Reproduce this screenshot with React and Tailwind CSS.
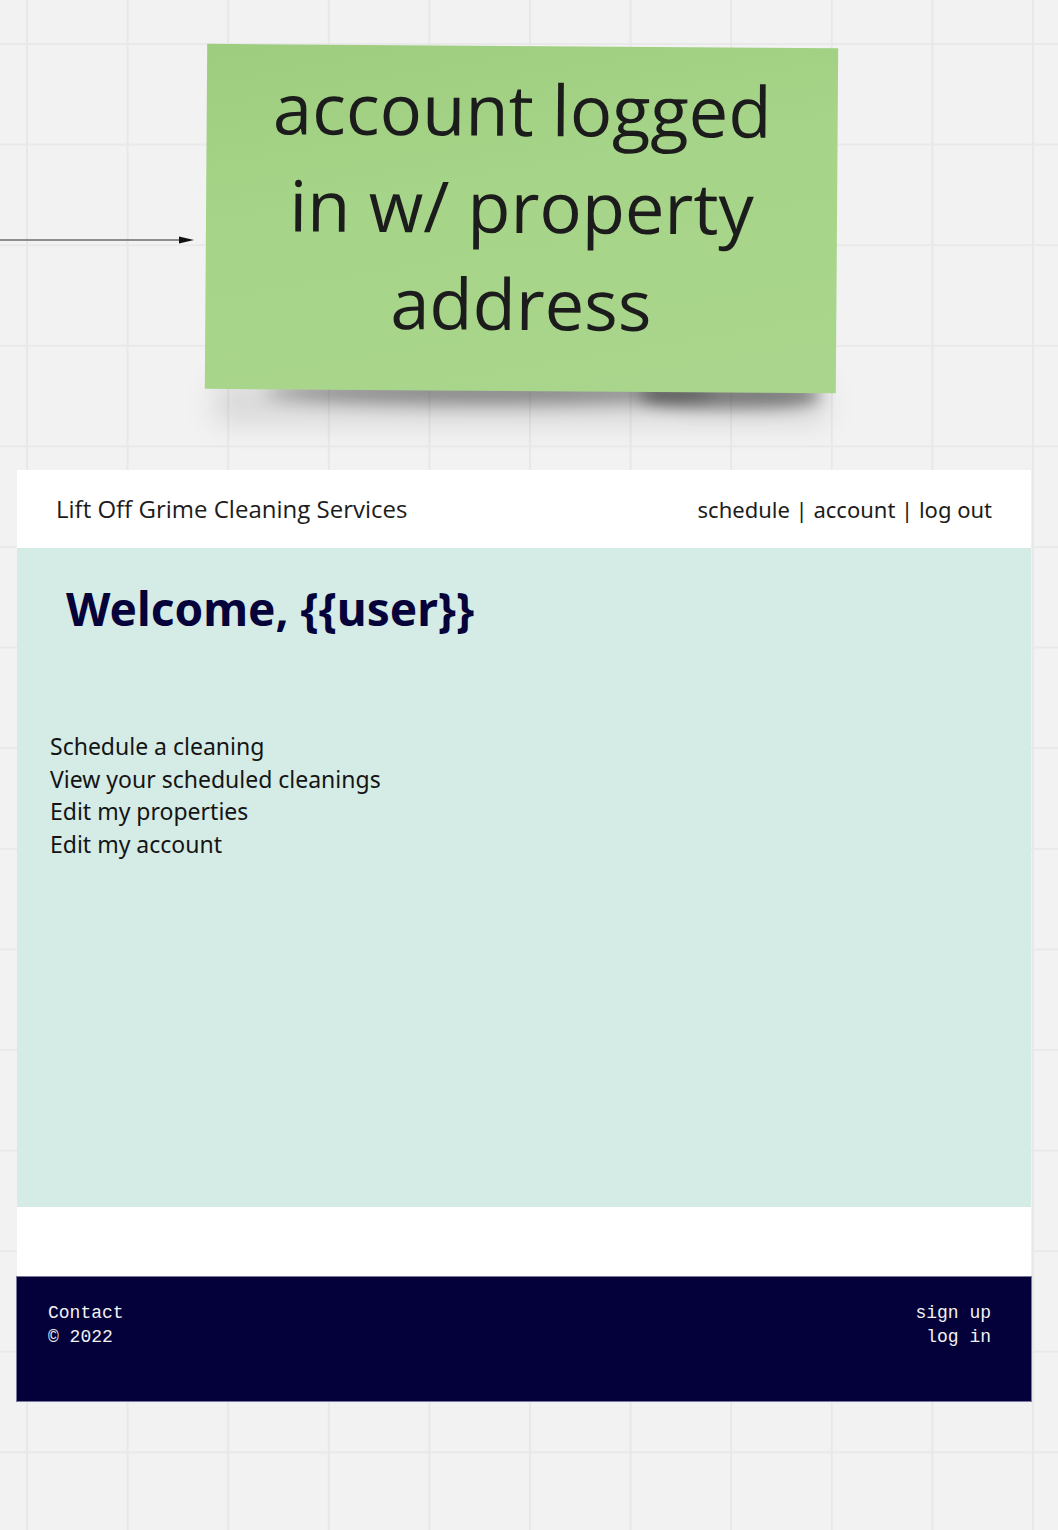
import React from "react";

export default function App() {
  return (
    <div className="relative w-[1058px] h-[1530px] overflow-hidden bg-[#f2f2f2] bg-[linear-gradient(to_right,#e8e8e8_2px,transparent_2px),linear-gradient(to_bottom,#e9e9e9_2px,transparent_2px)] bg-[size:100.6px_100.6px] bg-[position:26px_43px]">
      {/* arrow */}
      <svg className="absolute left-0 top-[234px]" width="200" height="12" viewBox="0 0 200 12">
        <line x1="0" y1="6" x2="182" y2="6" stroke="#6b6b6b" strokeWidth="1.5" />
        <polygon points="179,2.5 194,6 179,9.5" fill="#111" />
      </svg>

      {/* sticky note shadow */}
      <div className="absolute left-[265px] top-[380px] w-[450px] h-[24px] rounded-[50%] bg-black/40 blur-[9px]" />
      <div className="absolute left-[640px] top-[382px] w-[180px] h-[26px] rounded-[40%] bg-black/45 blur-[8px]" />
      <div className="absolute left-[215px] top-[380px] w-[610px] h-[44px] bg-black/10 blur-[14px]" />

      {/* sticky note */}
      <div className="absolute left-[206px] top-[46px] w-[631px] h-[345px] rotate-[0.4deg] bg-[linear-gradient(170deg,#9ecd7f_0%,#a6d488_40%,#a9d68c_100%)] flex items-center justify-center">
        <div className="text-center text-[70.5px] leading-[97px] text-[#1c1c1c] font-['Open_Sans',sans-serif] -mt-[24px]">
          account logged
          <br />
          in w/ property
          <br />
          address
        </div>
      </div>

      {/* page frame */}
      <div className="pt-[470px] pl-[17px]">
        <div className="w-[1014px] flex flex-col">
          <header className="h-[78px] bg-white flex items-center justify-between pl-[39px] pr-[39px]">
            <span className="text-[24px] text-[#1c1c1c] font-['Open_Sans',sans-serif]">
              Lift Off Grime Cleaning Services
            </span>
            <span className="text-[22px] text-[#1c1c1c] font-['Noto_Sans',sans-serif]">
              schedule | account | log out
            </span>
          </header>
          <main className="h-[659px] bg-[#d4ebe6] flex flex-col">
            <h1 className="mt-[30px] ml-[49px] text-[46px] leading-[60px] font-bold text-[#05033a] font-['Noto_Sans',sans-serif]">
              Welcome, {"{{user}}"}
            </h1>
            <ul className="mt-[92px] ml-[33px] text-[23px] leading-[32.7px] text-[#141414] font-['Noto_Sans',sans-serif]">
              <li>Schedule a cleaning</li>
              <li>View your scheduled cleanings</li>
              <li>Edit my properties</li>
              <li>Edit my account</li>
            </ul>
          </main>
          <div className="h-[69px] bg-white" />
          <footer className="-ml-px w-[1016px] h-[126px] bg-[#03003a] border border-[#7a789c] flex justify-between pl-[31px] pr-[40px] pt-[24px] text-[18px] leading-[24px] text-[#f2f2f2] font-['Liberation_Mono',monospace]">
            <div>
              <div>Contact</div>
              <div>© 2022</div>
            </div>
            <div className="text-right">
              <div>sign up</div>
              <div>log in</div>
            </div>
          </footer>
        </div>
      </div>
    </div>
  );
}
